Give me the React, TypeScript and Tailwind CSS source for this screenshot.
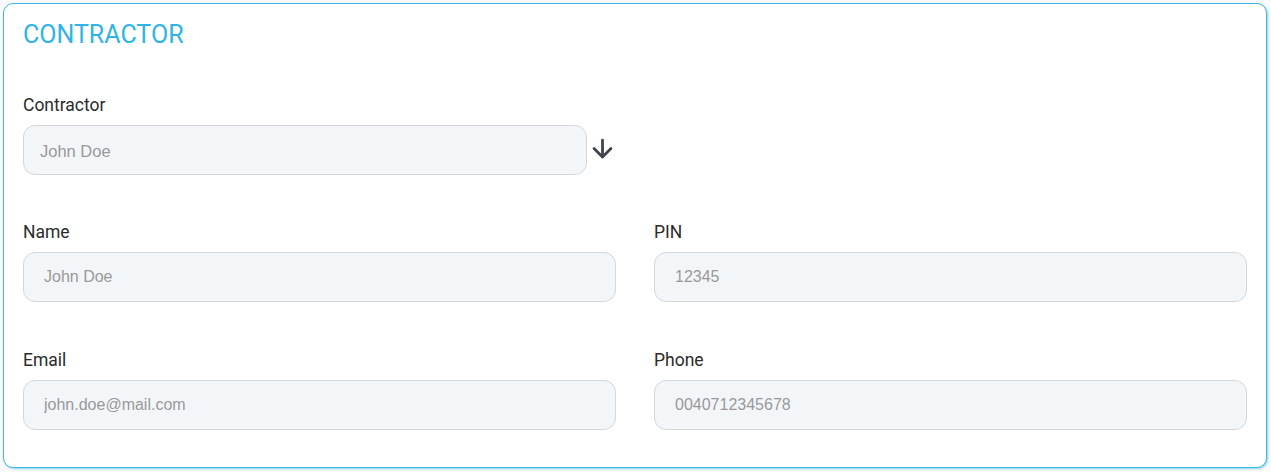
import { ArrowDown } from "lucide-react"

const inputCls =
  "w-full h-[50px] rounded-[12px] border border-[#d3d7dc] bg-[#f3f6f9] px-[20px] text-[16px] text-[#555] placeholder:text-[#999] outline-none [font-family:'Liberation_Sans',Arial,sans-serif]"

function Field({ label, value }: { label: string; value: string }) {
  return (
    <div className="flex flex-col">
      <label className="pt-[1px] mb-[10px] text-[17.5px] leading-[19px] text-[#2b2b2b]">{label}</label>
      <input className={inputCls} placeholder={value} readOnly />
    </div>
  )
}

export default function App() {
  return (
    <div className="min-h-screen bg-[#fafafa] p-[3px] pr-[4px] [font-family:Roboto,'Liberation_Sans',sans-serif]">
      <div className="rounded-[10px] border border-[#3db7e4] bg-white px-[19px] pt-[17px] pb-[37px] shadow-[1px_1px_2px_rgba(61,183,228,0.6)]">
        <h2 className="text-[25px] leading-[28px] font-normal text-[#2eb4e6]">CONTRACTOR</h2>

        <div className="mt-[46px]">
          <label className="pt-[1px] mb-[10px] block text-[17.5px] leading-[19px] text-[#2b2b2b]">Contractor</label>
          <div className="flex items-center">
            <input
              className={inputCls + " !w-[564px] !px-[16px] !pt-[3px] !text-[16.5px]"}
              placeholder="John Doe"
              readOnly
            />
            <ArrowDown className="ml-[1px] -mt-[4px] h-[29px] w-[29px] text-[#3f444c]" strokeWidth={2.3} />
          </div>
        </div>

        <div className="mt-[47px] grid grid-cols-2 gap-x-[38px] gap-y-[48px]">
          <Field label="Name" value="John Doe" />
          <Field label="PIN" value="12345" />
          <Field label="Email" value="john.doe@mail.com" />
          <Field label="Phone" value="0040712345678" />
        </div>
      </div>
    </div>
  )
}
